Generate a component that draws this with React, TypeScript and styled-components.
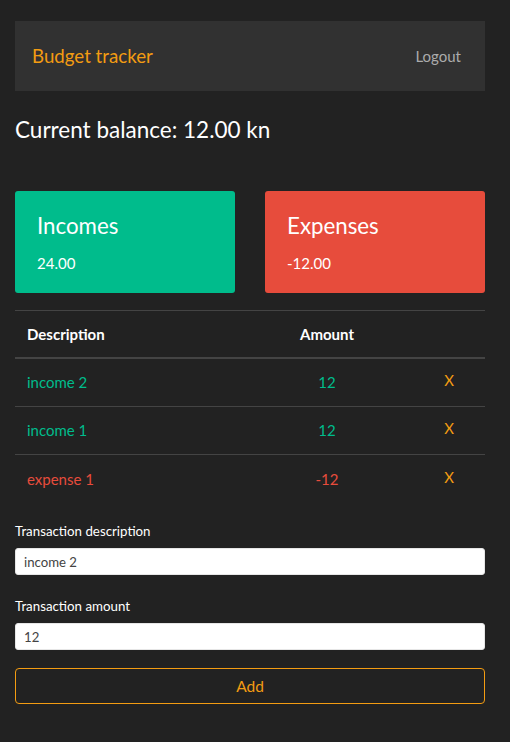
import React from "react";
import styled, { createGlobalStyle } from "styled-components";

const Global = createGlobalStyle`
  html, body { margin: 0; padding: 0; background: #222222; }
  body { font-family: Lato, "Open Sans", sans-serif; color: #ffffff; font-size: 15px; line-height: 1.5; }
  * { box-sizing: border-box; }
`;

const Page = styled.div`
  padding: 21px 25px 30px 15px;
  width: 510px;
`;

const Navbar = styled.nav`
  height: 70px;
  background: #313131;
  display: flex;
  align-items: center;
  justify-content: space-between;
  padding: 0 16px 0 17px;
`;

const Brand = styled.span`
  color: #f39c12;
  font-size: 18.7px;
  line-height: 1.2;
`;

const NavLink = styled.span`
  color: #ababab;
  font-size: 15px;
  padding: 0 8px;
`;

const Balance = styled.h2`
  margin: 26px 0 0;
  font-size: 22.5px;
  font-weight: 400;
  line-height: 26px;
`;

const Cards = styled.div`
  margin-top: 48px;
  display: grid;
  grid-template-columns: 220px 220px;
  justify-content: space-between;
`;

const Card = styled.div<{ $bg: string }>`
  background: ${(p) => p.$bg};
  border-radius: 3px;
  height: 102px;
  padding: 22px 22px 18px;
`;

const CardTitle = styled.div`
  font-size: 22.3px;
  line-height: 1.2;
  margin-bottom: 12px;
`;

const CardValue = styled.div`
  font-size: 15px;
  line-height: 1.5;
`;

const Table = styled.div`
  margin-top: 17px;
  border-top: 1px solid #444444;
`;

const Row = styled.div<{ $head?: boolean }>`
  display: grid;
  grid-template-columns: 226px 172px 72px;
  height: 48px;
  align-items: center;
  border-bottom: ${(p) => (p.$head ? "2px solid #444444" : "1px solid #444444")};
  &:last-child { border-bottom: none; }
`;

const Cell = styled.div<{ $center?: boolean; $color?: string; $bold?: boolean }>`
  padding: 0 12px;
  text-align: ${(p) => (p.$center ? "center" : "left")};
  color: ${(p) => p.$color || "#ffffff"};
  font-weight: ${(p) => (p.$bold ? 700 : 400)};
  font-size: 15px;
`;

const RemoveButton = styled.button`
  background: none;
  border: none;
  padding: 0;
  margin: 0 auto;
  display: block;
  color: #f39c12;
  font-family: Lato, sans-serif;
  font-size: 15px;
  line-height: 1;
  cursor: pointer;
  transform: translateY(-2px);
`;

const Form = styled.form`
  margin-top: 18px;
  display: flex;
  flex-direction: column;
`;

const Label = styled.label`
  font-size: 13.3px;
  line-height: 21px;
  margin-bottom: 6px;
`;

const Input = styled.input`
  width: 100%;
  height: 27px;
  border: 1px solid #e6e6e6;
  border-radius: 3px;
  background: #ffffff;
  color: #444444;
  padding: 0 8px;
  font-family: Lato, sans-serif;
  font-size: 13.2px;
  margin-bottom: 21px;
  outline: none;
  &:last-of-type { margin-bottom: 18px; }
`;

const AddButton = styled.button`
  width: 100%;
  height: 36px;
  background: transparent;
  border: 1px solid #f39c12;
  border-radius: 4px;
  color: #f39c12;
  font-family: Lato, sans-serif;
  font-size: 15.5px;
  cursor: pointer;
`;

const transactions = [
  { desc: "income 2", amount: "12", color: "#00bc8c" },
  { desc: "income 1", amount: "12", color: "#00bc8c" },
  { desc: "expense 1", amount: "-12", color: "#e74c3c" },
];

export default function App() {
  return (
    <Page>
      <Global />
      <Navbar>
        <Brand>Budget tracker</Brand>
        <NavLink>Logout</NavLink>
      </Navbar>
      <Balance>Current balance: 12.00 kn</Balance>
      <Cards>
        <Card $bg="#00bc8c">
          <CardTitle>Incomes</CardTitle>
          <CardValue>24.00</CardValue>
        </Card>
        <Card $bg="#e74c3c">
          <CardTitle>Expenses</CardTitle>
          <CardValue>-12.00</CardValue>
        </Card>
      </Cards>
      <Table>
        <Row $head>
          <Cell $bold>Description</Cell>
          <Cell $bold $center>Amount</Cell>
          <Cell />
        </Row>
        {transactions.map((t) => (
          <Row key={t.desc}>
            <Cell $color={t.color}>{t.desc}</Cell>
            <Cell $center $color={t.color}>{t.amount}</Cell>
            <Cell $center>
              <RemoveButton type="button">X</RemoveButton>
            </Cell>
          </Row>
        ))}
      </Table>
      <Form onSubmit={(e) => e.preventDefault()}>
        <Label>Transaction description</Label>
        <Input defaultValue="income 2" />
        <Label>Transaction amount</Label>
        <Input defaultValue="12" />
        <AddButton type="submit">Add</AddButton>
      </Form>
    </Page>
  );
}
